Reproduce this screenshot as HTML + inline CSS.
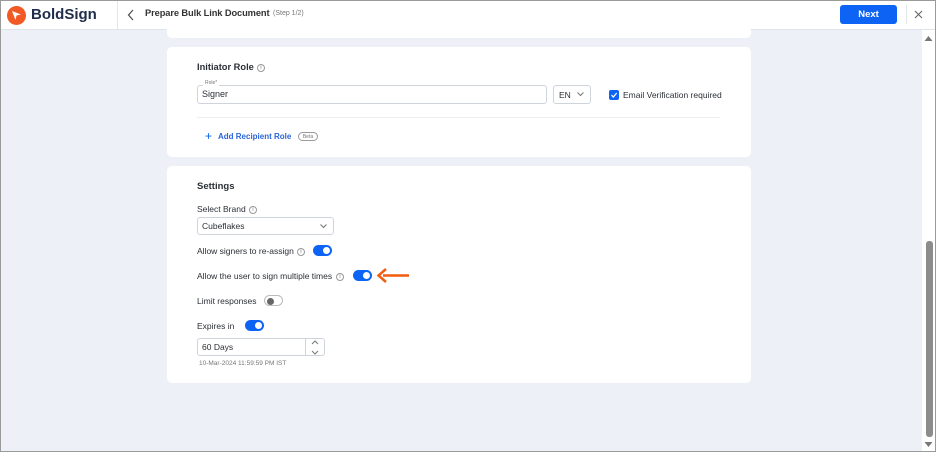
<!DOCTYPE html>
<html><head><style>
*{box-sizing:border-box;margin:0;padding:0}
body{width:936px;height:452px;overflow:hidden;font-family:"Liberation Sans",sans-serif;background:#edf1f7;position:relative;color:#2b2f36}
.frame{position:absolute;inset:0;border:1px solid #9a9a9a;pointer-events:none;z-index:9}
.hdr{position:absolute;left:0;top:0;width:936px;height:30px;background:#fff;border-bottom:1px solid #dfe3ea}
.card{position:absolute;left:167px;width:584px;background:#fff;border-radius:5px}
.a{position:absolute;white-space:nowrap}
.tg{position:absolute;width:19px;height:11px;border-radius:6px;background:#0d63f3}
.tg::after{content:"";position:absolute;right:2px;top:2px;width:7px;height:7px;border-radius:50%;background:#fff}
.off{background:#fff;border:1px solid #bbb}
.off::after{left:2px;right:auto;top:1.5px;background:#666}
.info{position:absolute;width:8px;height:8px;border:1px solid #999;border-radius:50%;font-size:5px;line-height:6px;text-align:center;color:#999;font-weight:bold}
.inp{position:absolute;border:1px solid #cfd4dc;border-radius:3px;background:#fff}
</style></head><body>
<div class="hdr">
 <svg class="a" style="left:7px;top:6px" width="19" height="19" viewBox="0 0 19 19"><circle cx="9.5" cy="9.5" r="9.5" fill="#f15a24"/><path d="M5 5 L14 8.5 L9.5 9.5 L8.5 14 Z" fill="#fff"/></svg>
 <div class="a" style="left:31px;top:6px;font-size:15px;font-weight:bold;color:#1f2d4a">BoldSign</div>
 <div class="a" style="left:117px;top:0;width:1px;height:30px;background:#e3e6ea"></div>
 <svg class="a" style="left:127px;top:9px" width="8" height="12"><path d="M6 1 L1.5 6 L6 11" stroke="#555" stroke-width="1.3" fill="none"/></svg>
 <div class="a" style="left:145px;top:8px;font-size:9.3px;font-weight:bold;color:#333;letter-spacing:-0.1px">Prepare Bulk Link Document</div>
 <div class="a" style="left:273px;top:10px;font-size:7px;color:#777">(Step 1/2)</div>
 <div class="a" style="left:840px;top:5px;width:57px;height:19px;background:#0d63f3;border-radius:3px;color:#fff;font-size:9.5px;font-weight:bold;text-align:center;line-height:19px">Next</div>
 <div class="a" style="left:906px;top:5px;width:1px;height:19px;background:#e3e6ea"></div>
 <svg class="a" style="left:914px;top:10px" width="9" height="9"><path d="M1 1 L8 8 M8 1 L1 8" stroke="#666" stroke-width="1.1"/></svg>
</div>
<div class="card" style="top:25px;height:13px;border-radius:0 0 5px 5px"></div>
<div class="card" style="top:47px;height:110px">
 <div class="a" style="left:30px;top:15px;font-size:9.3px;font-weight:bold">Initiator Role</div>
 <div class="info" style="left:90px;top:17px">i</div>
 <div class="inp" style="left:30px;top:38px;width:350px;height:19px"></div>
 <div class="a" style="left:36px;top:33px;font-size:5px;color:#777;background:#fff;padding:0 2px">Role*</div>
 <div class="a" style="left:35px;top:42px;font-size:9px">Signer</div>
 <div class="inp" style="left:386px;top:38px;width:38px;height:19px"></div>
 <div class="a" style="left:392px;top:43px;font-size:8.5px">EN</div>
 <svg class="a" style="left:410px;top:45px" width="7" height="5"><path d="M0.5 0.5 L3.5 3.5 L6.5 0.5" stroke="#777" fill="none"/></svg>
 <div class="a" style="left:442px;top:43px;width:10px;height:10px;background:#0d63f3;border-radius:2px"></div>
 <svg class="a" style="left:443px;top:44px" width="8" height="8"><path d="M1.5 4 L3.3 6 L6.7 2" stroke="#fff" stroke-width="1.3" fill="none"/></svg>
 <div class="a" style="left:456px;top:43px;font-size:8.5px">Email Verification required</div>
 <div class="a" style="left:30px;top:70px;width:523px;height:1px;background:#eceef1"></div>
 <div class="a" style="left:38px;top:82px;font-size:12px;color:#0d63f3;line-height:14px">+</div>
 <div class="a" style="left:51px;top:85px;font-size:8px;font-weight:bold;color:#2a66d8">Add Recipient Role</div>
 <div class="a" style="left:131px;top:85px;width:20px;height:9px;border:1px solid #999;border-radius:5px;font-size:5px;color:#777;text-align:center;line-height:8px">Beta</div>
</div>
<div class="card" style="top:166px;height:217px">
 <div class="a" style="left:30px;top:15px;font-size:9.5px;font-weight:bold">Settings</div>
 <div class="a" style="left:30px;top:38px;font-size:8.5px">Select Brand</div>
 <div class="info" style="left:82px;top:40px">i</div>
 <div class="inp" style="left:30px;top:51px;width:137px;height:18px"></div>
 <div class="a" style="left:35px;top:55px;font-size:8.5px">Cubeflakes</div>
 <svg class="a" style="left:153px;top:58px" width="7" height="5"><path d="M0.5 0.5 L3.5 3.5 L6.5 0.5" stroke="#777" fill="none"/></svg>
 <div class="a" style="left:30px;top:80px;font-size:8.5px">Allow signers to re-assign</div>
 <div class="info" style="left:130px;top:82px">i</div>
 <div class="tg" style="left:146px;top:79px"></div>
 <div class="a" style="left:30px;top:105px;font-size:8.5px">Allow the user to sign multiple times</div>
 <div class="info" style="left:169px;top:107px">i</div>
 <div class="tg" style="left:186px;top:104px"></div>
 <svg class="a" style="left:210px;top:102px" width="33" height="15"><path d="M32 7.5 L6 7.5" stroke="#f25c0f" stroke-width="2.5"/><path d="M9 1 L1.5 7.5 L9 14" stroke="#f25c0f" stroke-width="2.5" fill="none"/></svg>
 <div class="a" style="left:30px;top:130px;font-size:8.5px">Limit responses</div>
 <div class="tg off" style="left:97px;top:129px"></div>
 <div class="a" style="left:30px;top:155px;font-size:8.5px">Expires in</div>
 <div class="tg" style="left:78px;top:154px"></div>
 <div class="inp" style="left:30px;top:172px;width:128px;height:18px"></div>
 <div class="a" style="left:138px;top:172px;width:1px;height:18px;background:#cfd4dc"></div>
 <div class="a" style="left:35px;top:176px;font-size:8.5px">60 Days</div>
 <svg class="a" style="left:144px;top:174px" width="8" height="15"><path d="M1 4 L4 1 L7 4 M1 11 L4 14 L7 11" stroke="#777" fill="none"/></svg>
 <div class="a" style="left:32px;top:194px;font-size:6.5px;color:#777">10-Mar-2024 11:59:59 PM IST</div>
</div>
<div class="a" style="left:922px;top:30px;width:13px;height:422px;background:#fff"></div>
<svg class="a" style="left:924px;top:35px" width="9" height="7"><path d="M0.5 6 L4.5 1 L8.5 6Z" fill="#777"/></svg>
<div class="a" style="left:926px;top:241px;width:7px;height:196px;background:#8c8c8c;border-radius:3px"></div>
<svg class="a" style="left:924px;top:441px" width="9" height="7"><path d="M0.5 1 L4.5 6 L8.5 1Z" fill="#777"/></svg>
<div class="frame"></div>
</body></html>
